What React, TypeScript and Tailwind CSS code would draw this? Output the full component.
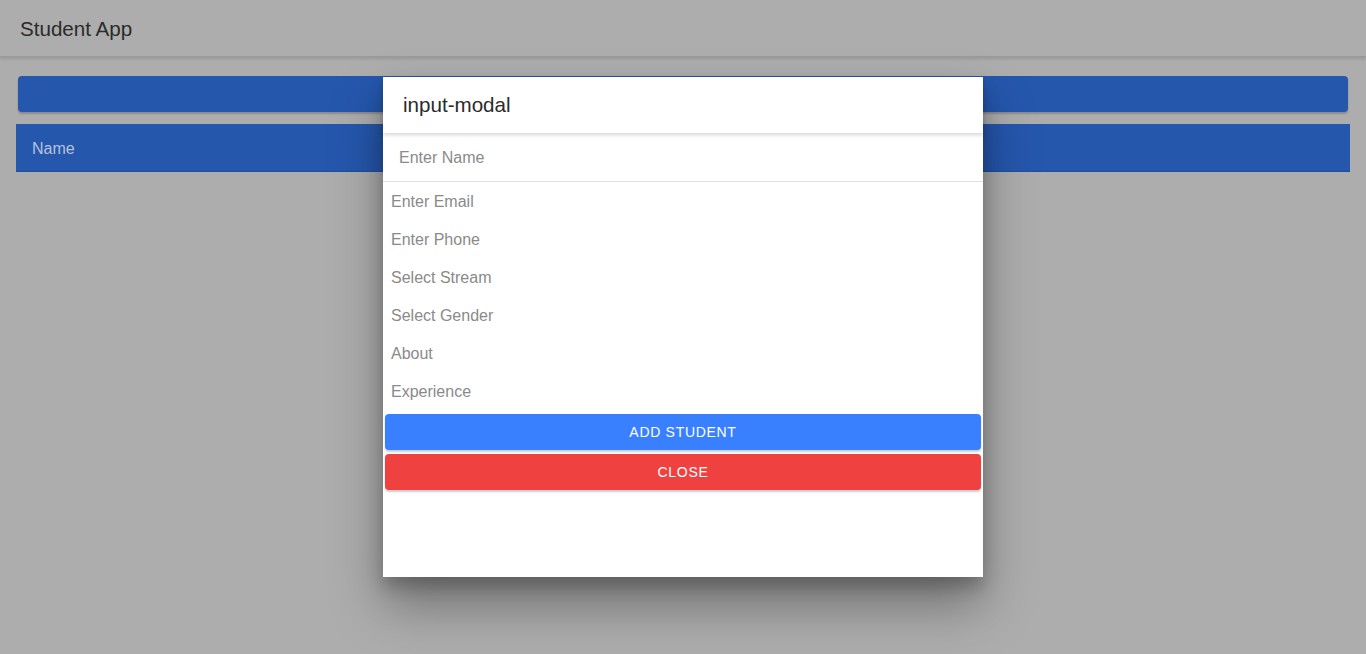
import React from "react";

export default function App() {
  const font = { fontFamily: '"Liberation Sans", Arial, sans-serif' };
  const items = ["Enter Email", "Enter Phone", "Select Stream", "Select Gender", "About", "Experience"];
  return (
    <div className="relative w-[1366px] h-[654px] overflow-hidden bg-[#adadad]" style={font}>
      <div className="h-[57px] flex items-center px-5 pt-[2px] border-b border-[#9a9a9a] shadow-[0_2px_3px_rgba(0,0,0,0.12)]">
        <span className="text-[20.6px] text-[#2b2b2b]">Student App</span>
      </div>
      <div className="px-4 pt-[19px]">
        <div className="mx-[2px] h-[36px] rounded-[4px] bg-[#2557ad] shadow-[0_2px_2px_rgba(0,0,0,0.2)]" />
        <div className="mt-3 h-[48px] bg-[#2557ad] border-b border-[#1f4f9f] flex items-center px-4 pt-[2px]">
          <span className="text-[16px] text-[#b6c2dc]">Name</span>
        </div>
      </div>

      <div className="absolute left-[383px] top-[77px] w-[600px] h-[500px] bg-white shadow-[0_28px_48px_rgba(0,0,0,0.35),0_10px_15px_rgba(0,0,0,0.2)] flex flex-col">
        <div className="h-[56px] flex items-center px-5 pt-[1px] shadow-[0_2px_4px_rgba(0,0,0,0.16)] relative z-10">
          <span className="text-[20.6px] text-[#2b2b2b]">input-modal</span>
        </div>
        <div className="h-[49px] flex items-center px-4 pt-[2px] border-b border-[#dedede]">
          <span className="text-[16px] text-[#8a8a8a]">Enter Name</span>
        </div>
        <div className="flex flex-col pt-[1px]">
          {items.map((t) => (
            <div key={t} className="h-[38px] flex items-center px-2">
              <span className="text-[16px] text-[#8a8a8a]">{t}</span>
            </div>
          ))}
        </div>
        <div className="px-[2px] pt-[3px] flex flex-col gap-1">
          <button className="h-[36px] rounded-[4px] bg-[#3880ff] text-white text-[14px] tracking-[0.05em] font-medium shadow-[0_2px_2px_rgba(0,0,0,0.2)]" style={font}>
            ADD STUDENT
          </button>
          <button className="h-[36px] rounded-[4px] bg-[#f04141] text-white text-[14px] tracking-[0.05em] font-medium shadow-[0_2px_2px_rgba(0,0,0,0.2)]" style={font}>
            CLOSE
          </button>
        </div>
      </div>
    </div>
  );
}
